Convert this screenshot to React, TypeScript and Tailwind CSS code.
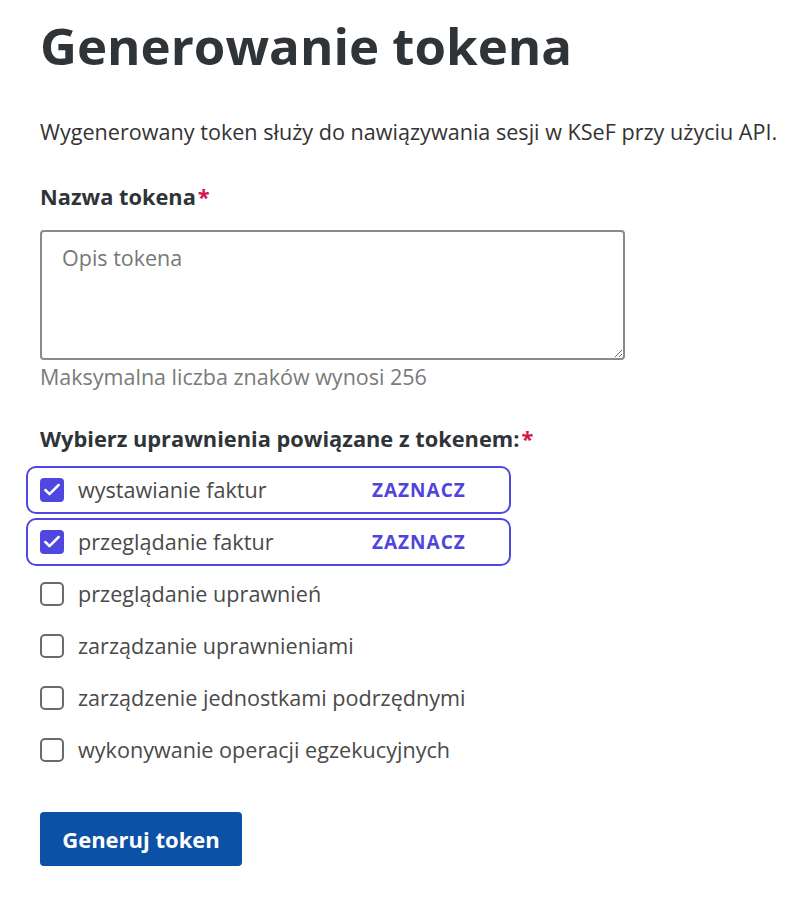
import { Check } from "lucide-react";

const permissions = [
  { label: "wystawianie faktur", checked: true },
  { label: "przeglądanie faktur", checked: true },
  { label: "przeglądanie uprawnień", checked: false },
  { label: "zarządzanie uprawnieniami", checked: false },
  { label: "zarządzenie jednostkami podrzędnymi", checked: false },
  { label: "wykonywanie operacji egzekucyjnych", checked: false },
];

function Checkbox({ checked }: { checked: boolean }) {
  if (checked) {
    return (
      <span className="w-[24px] h-[24px] rounded-[4px] bg-[#5046e0] flex items-center justify-center shrink-0">
        <Check size={20} color="#fff" strokeWidth={3} />
      </span>
    );
  }
  return <span className="w-[24px] h-[24px] rounded-[5px] border-2 border-[#6b6b6b] bg-white shrink-0" />;
}

export default function App() {
  return (
    <div className="min-h-screen bg-white text-[#333] px-[40px]" style={{ fontFamily: '"Open Sans", "Noto Sans", sans-serif' }}>
      {/* Header */}
      <h1 className="pt-[19px] text-[51px] leading-[52px] font-bold text-[#2f3438]">
        Generowanie tokena
      </h1>
      <p className="mt-[47px] whitespace-nowrap text-[21.6px] leading-[28px] text-[#333]">
        Wygenerowany token służy do nawiązywania sesji w KSeF przy użyciu API.
      </p>

      {/* Token name */}
      <label className="block mt-[37px] text-[21.8px] leading-[28px] font-bold text-[#2f3438]">
        Nazwa tokena<span className="ml-[2px] text-[#d3134e]">*</span>
      </label>
      <textarea
        placeholder="Opis tokena"
        className="block mt-[19px] w-[585px] h-[130px] border-2 border-[#8a8a8a] rounded-[4px] pl-[20px] pr-[14px] pt-[12px] text-[21.5px] leading-[28px] placeholder:text-[#777] outline-none"
      />
      <p className="mt-[3px] text-[21.5px] leading-[28px] text-[#7a7a7a]">Maksymalna liczba znaków wynosi 256</p>

      {/* Permissions */}
      <p className="mt-[34px] whitespace-nowrap text-[21.8px] leading-[28px] font-bold text-[#2f3438]">
        Wybierz uprawnienia powiązane z tokenem:<span className="ml-[2px] text-[#d3134e]">*</span>
      </p>
      <div className="mt-[13px] -mx-[14px] flex flex-col gap-[4px]">
        {permissions.map((p) => (
          <div
            key={p.label}
            className={
              p.checked
                ? "w-[485px] h-[48px] flex items-center px-[12px] border-2 border-[#5046e0] rounded-[10px]"
                : "w-[485px] h-[48px] flex items-center px-[14px]"
            }
          >
            <Checkbox checked={p.checked} />
            <span
              className={
                p.checked
                  ? "ml-[14px] w-[294px] text-[21.6px] text-[#4a4a4a]"
                  : "ml-[14px] whitespace-nowrap text-[21.6px] text-[#4a4a4a]"
              }
            >
              {p.label}
            </span>
            {p.checked && <span className="text-[19px] font-bold text-[#4f44dc] tracking-[1px]">ZAZNACZ</span>}
          </div>
        ))}
      </div>

      {/* Submit */}
      <button className="mt-[38px] w-[202px] h-[54px] rounded-[4px] bg-[#0b51a6] text-white text-[22px] font-bold">
        Generuj token
      </button>
    </div>
  );
}
